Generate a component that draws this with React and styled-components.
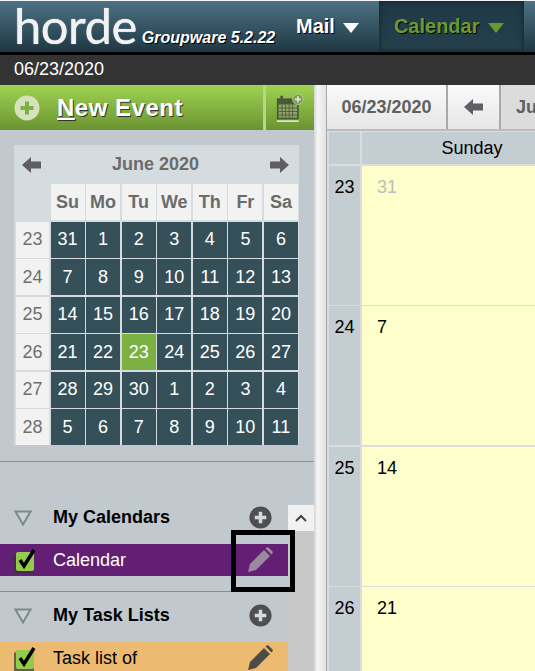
import React from "react"
import styled, { createGlobalStyle } from "styled-components"

const Global = createGlobalStyle`
  html, body {
    margin: 0;
    padding: 0;
    background: #fff;
    overflow: hidden;
  }
  body {
    font-family: "Liberation Sans", Arial, sans-serif;
  }
`

const Page = styled.div`
  width: 535px;
  height: 671px;
  overflow: hidden;
  display: flex;
  flex-direction: column;
  position: relative;
  background: #f4f4f4;
`

const TopBar = styled.div`
  height: 51px;
  margin-top: 1px;
  flex: none;
  display: flex;
  align-items: stretch;
  background: linear-gradient(#4d7283, #1f3743);
  border-bottom: 3px solid #000;
`

const Brand = styled.div`
  width: 280px;
  flex: none;
  display: flex;
  align-items: flex-end;
  padding-left: 14px;
  box-sizing: border-box;
`

const Logo = styled.span`
  font-family: "Lato", sans-serif;
  font-size: 49px;
  line-height: 52px;
  letter-spacing: -0.5px;
  color: #f2f2f2;
  margin-bottom: 1px;
  text-shadow: 0 0 1px #f2f2f2;
`

const Version = styled.span`
  font-size: 16px;
  font-weight: bold;
  font-style: italic;
  color: #fff;
  text-shadow: 1px 1px 0 #000;
  margin: 0 0 5px 5px;
  white-space: nowrap;
`

const NavItem = styled.div`
  display: flex;
  align-items: center;
  gap: 8px;
  padding: 0 20px 0 ${p => (p.$active ? 15 : 16)}px;
  font-size: 20px;
  font-weight: bold;
  color: ${p => (p.$active ? "#6c9a30" : "#fff")};
  text-shadow: 1px 1px 0 #000;
  background: ${p => (p.$active ? "linear-gradient(#1e3945, #26414d)" : "transparent")};
  box-shadow: ${p => (p.$active ? "inset 0 0 6px #12222a" : "none")};
`

const Caret = styled.span`
  width: 0;
  height: 0;
  margin-top: 2px;
  border-left: 8.5px solid transparent;
  border-right: 8.5px solid transparent;
  border-top: 10px solid ${p => p.$color};
`

const DateBar = styled.div`
  height: 30px;
  flex: none;
  background: #333;
  color: #fff;
  font-size: 18px;
  line-height: 28px;
  padding-left: 14px;
`

const Body = styled.div`
  flex: 1;
  display: flex;
  min-height: 0;
`

const Sidebar = styled.div`
  width: 314px;
  flex: none;
  display: flex;
  flex-direction: column;
  background: #c1c9ce;
`

const NewEvent = styled.div`
  height: 45px;
  flex: none;
  display: flex;
  align-items: center;
  background: linear-gradient(#9fd352, #6a9331);
  padding-left: 14px;
`

const NewEventLabel = styled.span`
  font-size: 24px;
  font-weight: bold;
  letter-spacing: 0.5px;
  color: #fff;
  text-shadow: 1px 1px 0 #333;
  margin-left: 17px;
  u {
    text-underline-offset: 2px;
  }
`

const NewEventSide = styled.div`
  margin-left: auto;
  width: 51px;
  height: 100%;
  box-sizing: border-box;
  border-left: 3px solid #b7d58d;
  display: flex;
  align-items: center;
  justify-content: center;
`

const MiniPanel = styled.div`
  margin: 15px 0 0 14px;
  width: 285px;
  height: 300px;
  flex: none;
  background: #d5dcdf;
  display: flex;
  flex-direction: column;
  padding: 0 1px 0 2px;
  box-sizing: border-box;
`

const MiniHead = styled.div`
  height: 39px;
  flex: none;
  display: flex;
  align-items: center;
  justify-content: space-between;
  padding: 0 9px 0 6px;
  font-size: 18px;
  font-weight: bold;
  color: #6b6b6b;
`

const MiniGrid = styled.div`
  display: grid;
  grid-template-columns: 33px repeat(7, 1fr);
  grid-auto-rows: 36px;
  gap: 1.5px;
`

const MiniHeader = styled.div`
  background: #f2f2f2;
  display: flex;
  align-items: center;
  justify-content: center;
  color: #6b6b6b;
  font-size: 18px;
  font-weight: bold;
`

const MiniBlank = styled.div``

const MiniWeek = styled.div`
  background: #f2f2f2;
  display: flex;
  align-items: center;
  justify-content: center;
  color: #6f6f6f;
  font-size: 18px;
`

const MiniDay = styled.div`
  background: ${p => (p.$today ? "#7db043" : "#365059")};
  display: flex;
  align-items: center;
  justify-content: center;
  color: #fff;
  font-size: 18px;
`

const Rule = styled.div`
  height: 1px;
  flex: none;
  background: #87908f;
`

const Gap = styled.div`
  height: ${p => p.$h}px;
  flex: none;
`

const Lists = styled.div`
  flex: 1;
  display: flex;
  min-height: 0;
  position: relative;
`

const ListCol = styled.div`
  flex: 1;
  min-width: 0;
  display: flex;
  flex-direction: column;
`

const SectionHead = styled.div`
  height: 50px;
  flex: none;
  display: flex;
  align-items: center;
  box-sizing: border-box;
  padding: 0 16px 3px 14px;
  font-size: 18px;
  font-weight: bold;
  color: #000;
`

const SectionName = styled.span`
  margin-left: 21px;
  flex: 1;
`

const Row = styled.div`
  height: 32px;
  flex: none;
  display: flex;
  align-items: center;
  padding: 0 15px 0 14px;
  background: ${p => p.$bg};
  color: ${p => p.$fg};
  font-size: 18px;
`

const RowName = styled.span`
  margin-left: 15px;
  flex: 1;
`

const Scroll = styled.div`
  width: 26px;
  flex: none;
  background: #c8c8c8;
  padding-top: 43px;
  background-clip: content-box;
  box-sizing: border-box;
`

const ScrollUp = styled.div`
  height: 26px;
  background: #f1f1f1;
  display: flex;
  align-items: center;
  justify-content: center;
`

const Highlight = styled.div`
  position: absolute;
  left: 231px;
  top: 68px;
  width: 64px;
  height: 62px;
  border: 5px solid #000;
  box-sizing: border-box;
`

const Splitter = styled.div`
  width: 13px;
  flex: none;
  box-sizing: border-box;
  background: linear-gradient(90deg, #d4d4d4, #f5f5f5 30%, #e2e2e2);
  border-right: 1px solid #a8a8a8;
`

const Main = styled.div`
  flex: 1;
  min-width: 0;
  display: flex;
  flex-direction: column;
  background: #e6e6e6;
`

const Toolbar = styled.div`
  height: 44px;
  flex: none;
  display: flex;
  border-bottom: 2px solid #bcbcbc;
`

const ToolButton = styled.div`
  width: ${p => p.$w}px;
  flex: none;
  display: flex;
  align-items: center;
  justify-content: center;
  box-sizing: border-box;
  border-right: 2px solid #a9a9a9;
  background: linear-gradient(#fafafa, #e6e6e6);
  color: #5f5f5f;
  font-size: 18px;
  font-weight: bold;
`

const ToolTab = styled.div`
  flex: 1;
  background: #dcdcdc;
  color: #5f5f5f;
  font-size: 18px;
  font-weight: bold;
  line-height: 44px;
  padding-left: 15px;
  overflow: hidden;
`

const WeekGrid = styled.div`
  flex: 1;
  display: grid;
  grid-template-columns: 31px 220px;
  grid-template-rows: 32px repeat(4, 139px);
  gap: 1.5px 2px;
  padding: 1px 0 0 2px;
  background: #dcdcdc;
  min-height: 0;
`

const HeadCell = styled.div`
  background: #c4cdd1;
  display: flex;
  align-items: center;
  justify-content: center;
  font-size: 18px;
  color: #000;
`

const WeekCell = styled.div`
  background: #c4cdd1;
  font-size: 18px;
  color: #000;
  text-align: center;
  padding-top: 11px;
`

const DayCell = styled.div`
  background: #ffffcc;
  font-size: 18px;
  color: ${p => (p.$muted ? "#bdbdbd" : "#000")};
  padding: 11px 0 0 15px;
`

const PlusCircle = ({ size = 26, bg, fg }) => (
  <svg width={size} height={size} viewBox="0 0 26 26">
    <circle cx="13" cy="13" r="12.5" fill={bg} />
    <path d="M13 6.5v13M6.5 13h13" stroke={fg} strokeWidth="4" />
  </svg>
)

const Arrow = ({ flip }) => (
  <svg width="20" height="18" viewBox="0 0 20 18" style={flip ? { transform: "scaleX(-1)" } : undefined}>
    <path d="M0 9 9 1v4.5h10v7H9V17z" fill="#5f5f63" />
  </svg>
)

const Triangle = () => (
  <svg width="18" height="16" viewBox="0 0 18 16">
    <path d="M1.5 1.5h15L9 14.5z" fill="#c9d0d3" stroke="#7e8789" strokeWidth="2" />
  </svg>
)

const Check = () => (
  <svg width="24" height="26" viewBox="0 0 24 26">
    <rect x="0" y="7" width="20" height="20" rx="2" fill="#333" opacity="0.7" />
    <rect x="2" y="5" width="18" height="19" rx="2" fill="#93cc4c" />
    <path d="M6 13l4 6 10-16" fill="none" stroke="#000" strokeWidth="3.5" />
  </svg>
)

const Pencil = ({ color }) => (
  <svg width="26" height="26" viewBox="0 0 26 26">
    <path d="M1 25l2-8L17 3l6 6L9 23z" fill={color} />
    <path d="M18.5 1.5l1-1q1-.5 2 0l4 4q.5 1 0 2l-1 1z" fill={color} />
  </svg>
)

const CalendarIcon = () => (
  <svg width="28" height="30" viewBox="0 0 32 34">
    <rect x="1" y="6" width="25" height="24" fill="#4a5a36" />
    <rect x="3" y="13" width="21" height="15" fill="#8fa86a" />
    <path d="M3 17h21M3 21h21M3 25h21M7 13v15M11 13v15M15 13v15M19 13v15" stroke="#4a5a36" />
    <rect x="5" y="3" width="3" height="6" fill="#4a5a36" />
    <rect x="1" y="31" width="25" height="2" fill="#d7e6be" />
    <circle cx="25" cy="7" r="6" fill="#7f9a5b" stroke="#b6d08f" />
    <path d="M25 3.5v7M21.5 7h7" stroke="#d9e8c6" strokeWidth="2" />
  </svg>
)

const Chevron = () => (
  <svg width="12" height="8" viewBox="0 0 12 8">
    <path d="M1 7l5-5 5 5" fill="none" stroke="#444" strokeWidth="2" />
  </svg>
)

const weeks = [
  [23, [31, 1, 2, 3, 4, 5, 6]],
  [24, [7, 8, 9, 10, 11, 12, 13]],
  [25, [14, 15, 16, 17, 18, 19, 20]],
  [26, [21, 22, 23, 24, 25, 26, 27]],
  [27, [28, 29, 30, 1, 2, 3, 4]],
  [28, [5, 6, 7, 8, 9, 10, 11]],
]

const dayNames = ["Su", "Mo", "Tu", "We", "Th", "Fr", "Sa"]

export default function App() {
  return (
    <Page>
      <Global />
      <TopBar>
        <Brand>
          <Logo>horde</Logo>
          <Version>Groupware 5.2.22</Version>
        </Brand>
        <NavItem>
          Mail
          <Caret $color="#fff" />
        </NavItem>
        <NavItem $active>
          Calendar
          <Caret $color="#6c9a30" />
        </NavItem>
      </TopBar>
      <DateBar>06/23/2020</DateBar>
      <Body>
        <Sidebar>
          <NewEvent>
            <PlusCircle bg="#d5e2bd" fg="#7fae45" />
            <NewEventLabel>
              <u>N</u>ew Event
            </NewEventLabel>
            <NewEventSide>
              <CalendarIcon />
            </NewEventSide>
          </NewEvent>
          <MiniPanel>
            <MiniHead>
              <Arrow />
              June 2020
              <Arrow flip />
            </MiniHead>
            <MiniGrid>
              <MiniBlank />
              {dayNames.map(d => (
                <MiniHeader key={d}>{d}</MiniHeader>
              ))}
              {weeks.map(([wk, days]) => (
                <React.Fragment key={wk}>
                  <MiniWeek>{wk}</MiniWeek>
                  {days.map((d, i) => (
                    <MiniDay key={i} $today={wk === 26 && d === 23}>
                      {d}
                    </MiniDay>
                  ))}
                </React.Fragment>
              ))}
            </MiniGrid>
          </MiniPanel>
          <Gap $h={16} />
          <Rule />
          <Lists>
            <ListCol>
              <Gap $h={32} />
              <SectionHead>
                <Triangle />
                <SectionName>My Calendars</SectionName>
                <PlusCircle size={23} bg="#4d4f52" fg="#d8d8d8" />
              </SectionHead>
              <Row $bg="#621f74" $fg="#fff">
                <Check />
                <RowName>Calendar</RowName>
                <Pencil color="#9a8a9e" />
              </Row>
              <Gap $h={15} />
              <Rule />
              <SectionHead>
                <Triangle />
                <SectionName>My Task Lists</SectionName>
                <PlusCircle size={23} bg="#4d4f52" fg="#d8d8d8" />
              </SectionHead>
              <Row $bg="#edba72" $fg="#000">
                <Check />
                <RowName>Task list of</RowName>
                <Pencil color="#4f4a44" />
              </Row>
            </ListCol>
            <Scroll>
              <ScrollUp>
                <Chevron />
              </ScrollUp>
            </Scroll>
            <Highlight />
          </Lists>
        </Sidebar>
        <Splitter />
        <Main>
          <Toolbar>
            <ToolButton $w={121}>06/23/2020</ToolButton>
            <ToolButton $w={53}>
              <Arrow />
            </ToolButton>
            <ToolTab>June</ToolTab>
          </Toolbar>
          <WeekGrid>
            <HeadCell />
            <HeadCell>Sunday</HeadCell>
            <WeekCell>23</WeekCell>
            <DayCell $muted>31</DayCell>
            <WeekCell>24</WeekCell>
            <DayCell>7</DayCell>
            <WeekCell>25</WeekCell>
            <DayCell>14</DayCell>
            <WeekCell>26</WeekCell>
            <DayCell>21</DayCell>
          </WeekGrid>
        </Main>
      </Body>
    </Page>
  )
}
